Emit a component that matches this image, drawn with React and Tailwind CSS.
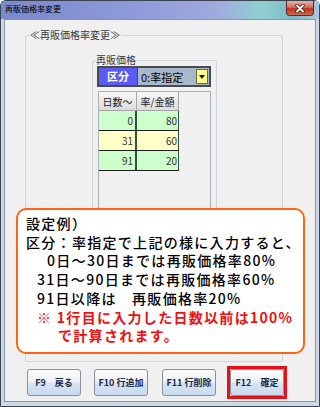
import React from "react";

const rows = [
  { days: "0", rate: "80", bg: "bg-[#ccffcc]" },
  { days: "31", rate: "60", bg: "bg-[#ffffc8]" },
  { days: "91", rate: "20", bg: "bg-[#ccffcc]" },
];

const btn =
  "w-[54px] h-[27px] flex items-center justify-center rounded-[3px] border border-[#8a8f98] bg-[linear-gradient(180deg,#fbfbfb_0%,#eef2f7_45%,#d6e3f1_55%,#c9dbee_100%)] text-[9px] font-bold text-[#1c2a4c] whitespace-pre";

const App = () => {
  return (
    <div className="relative w-[320px] h-[407px] overflow-hidden font-['Noto_Sans_CJK_JP','Noto_Sans',sans-serif] text-black">
      <div className="w-full h-full flex flex-col border border-[#3b4250] rounded-t-[6px] bg-[#cfd8e5]">
        {/* Title bar */}
        <div className="h-[18px] flex items-start bg-[linear-gradient(90deg,#7a88cd_0%,#8d99d8_40%,#a0aade_68%,#8fd0cf_82%,#7fb8c8_92%,#a9c6de_100%)]">
          <span className="pl-[4px] pt-[3px] text-[8px] leading-[10px]">再販価格率変更</span>
          <div className="ml-auto mr-[5px] w-[28px] h-[15px] flex items-center justify-center rounded-b-[4px] border border-t-0 border-[#5b2a23] bg-[linear-gradient(180deg,#eab0a2_0%,#d3705f_45%,#b8331f_55%,#cf6a52_100%)]">
            <svg width="10" height="9" viewBox="0 0 10 9">
              <path d="M2 1.5L8 7.5M8 1.5L2 7.5" stroke="#3a1a16" strokeWidth="3.4" strokeLinecap="round" />
              <path d="M2 1.5L8 7.5M8 1.5L2 7.5" stroke="#ffffff" strokeWidth="1.8" strokeLinecap="round" />
            </svg>
          </div>
        </div>

        {/* Client area */}
        <div className="mx-[3px] mb-[4px] flex-1 border border-[#8796ab] bg-[#f0f0f0] flex flex-col">
          <fieldset className="ml-[20px] mt-[9px] w-[258px] h-[333px] border border-[#cdd6de] rounded-[2px]">
            <legend className="ml-[3px] px-[1px] text-[10px] leading-[12px] text-[#3a3a3a]">≪再販価格率変更≫</legend>

            <fieldset className="ml-[66px] mt-[13px] w-[125px] h-[286px] border border-[#cdd6de] rounded-[2px]">
              <legend className="ml-[3px] px-[0px] text-[10px] leading-[12px] text-[#3a3a3a]">再販価格</legend>

              {/* combo row */}
              <div className="ml-[4px] w-[114px] h-[21px] flex border-2 border-[#4a4a4a] bg-[#4a4a4a]">
                <div className="w-[38px] flex items-center justify-center bg-[#5a5af4] text-white text-[11px] font-bold">区分</div>
                <div className="ml-[1px] flex-1 flex items-center bg-[#a8b9cd]">
                  <span className="pl-[3px] text-[11px] leading-[12px]">0:率指定</span>
                  <div className="ml-auto mr-[1px] w-[12px] h-[15px] flex items-center justify-center bg-[#ffff88] border border-[#6a6a40]">
                    <svg width="6" height="4" viewBox="0 0 6 4">
                      <path d="M0 0H6L3 4Z" fill="#111" />
                    </svg>
                  </div>
                </div>
              </div>

              {/* table pane */}
              <div className="ml-[5px] mt-[4px] w-[113px] h-[240px] border border-[#a9b0b8] bg-[#f0f0f0]">
                <div className="flex h-[19px]">
                  <div className="w-[38px] flex items-center justify-center border-r border-b border-[#a4a4a4] bg-[linear-gradient(180deg,#f7f7f7_0%,#dcdcdc_100%)] text-[10px] text-[#222]">日数～</div>
                  <div className="w-[42px] flex items-center justify-center border-r border-b border-[#a4a4a4] bg-[linear-gradient(180deg,#f7f7f7_0%,#dcdcdc_100%)] text-[10px] text-[#222]">率/金額</div>
                </div>
                {rows.map((r) => (
                  <div key={r.days} className={`flex h-[20px] w-[80px] border-b border-[#1e1e1e] ${r.bg}`}>
                    <div className="w-[38px] flex items-center justify-end pr-[2px] border-r-2 border-[#35503a] text-[10px] text-[#333]">{r.days}</div>
                    <div className="w-[42px] flex items-center justify-end pr-[1px] border-r border-[#35503a] text-[10px] text-[#333]">{r.rate}</div>
                  </div>
                ))}
              </div>
            </fieldset>
          </fieldset>

          {/* buttons */}
          <div className="ml-[22px] mt-[4px] flex items-center">
            <div className={btn}>F9　戻る</div>
            <div className={`ml-[13px] ${btn}`}>F10 行追加</div>
            <div className={`ml-[14px] ${btn}`}>F11 行削除</div>
            <div className="ml-[11px] border-[3px] border-[#e5121b]">
              <div className={btn}>F12　確定</div>
            </div>
          </div>
        </div>
      </div>

      {/* explanation callout */}
      <div className="absolute left-[16px] top-[208px] w-[289px] h-[146px] rounded-[10px] border-[2.5px] border-[#ff6414] bg-white pl-[8px] pt-[4px] text-[14px] leading-[18.7px] tracking-[1.3px] font-medium whitespace-pre">
        <div>設定例）</div>
        <div>区分：率指定で上記の様に入力すると、</div>
        <div className="pl-[21px]">0日～30日までは再販価格率80%</div>
        <div className="pl-[11px]">31日～90日までは再販価格率60%</div>
        <div className="pl-[11px]">91日以降は　再販価格率20%</div>
        <div className="pl-[11px] font-bold text-[#ee1111]">※ 1行目に入力した日数以前は100%</div>
        <div className="pl-[32px] font-bold text-[#ee1111]">で計算されます。</div>
      </div>
    </div>
  );
};

export default App;
